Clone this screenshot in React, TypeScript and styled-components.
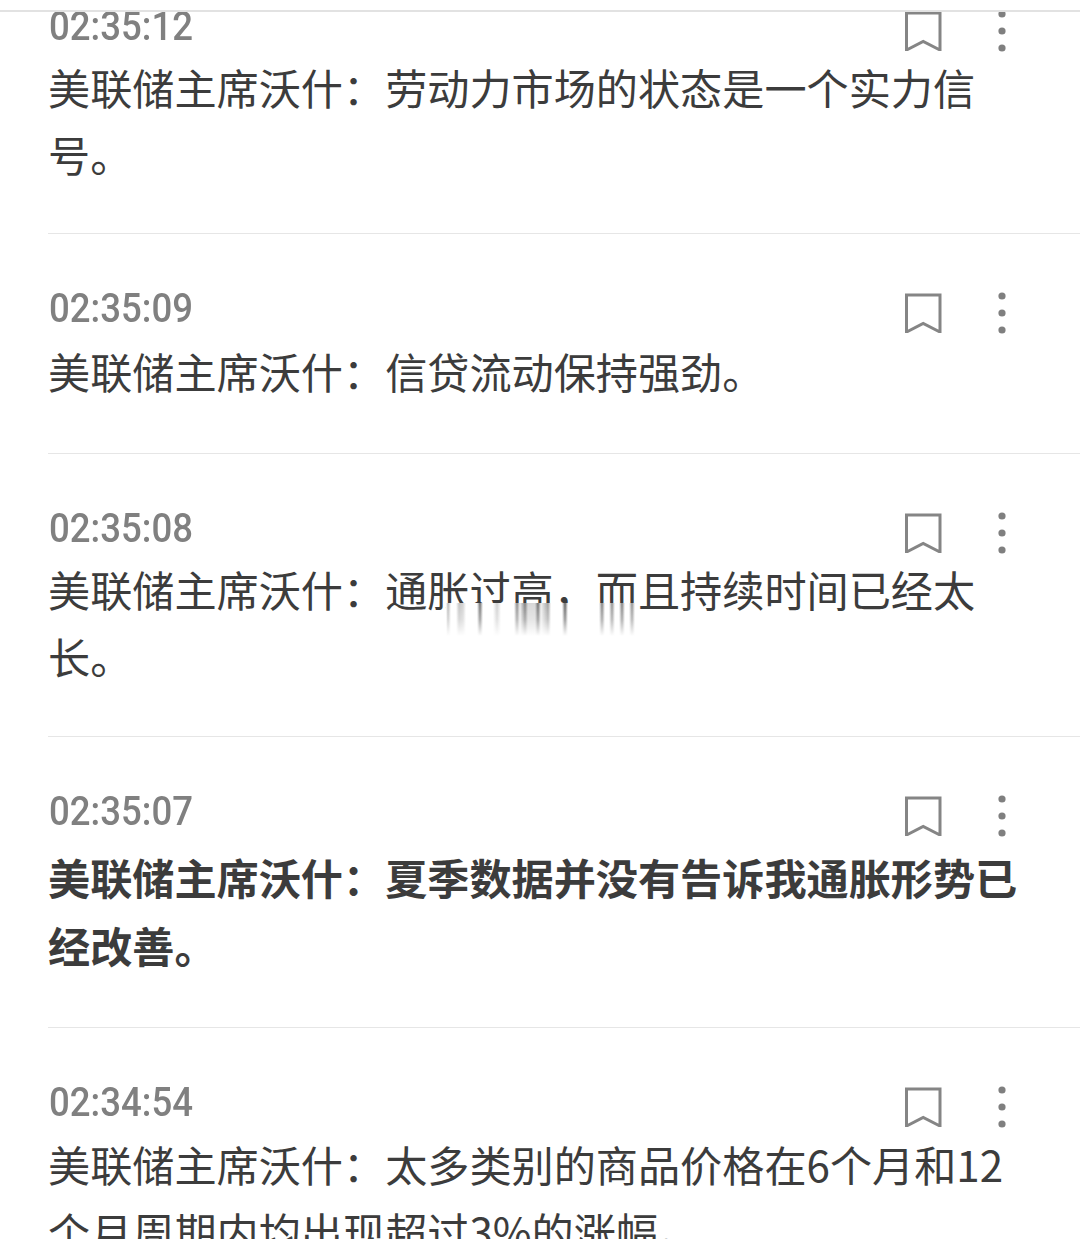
import React, { FC } from "react";
import styled, { createGlobalStyle } from "styled-components";

const GlobalStyle = createGlobalStyle`
  html, body {
    margin: 0;
    background: #fff;
  }
  * {
    box-sizing: border-box;
  }
`;

const Page = styled.div`
  position: relative;
  height: 1239px;
  padding-top: 10px;
  overflow: hidden;
  display: flex;
  flex-direction: column;
  background: #fff;
  font-family: "Noto Sans CJK SC", "Noto Sans", sans-serif;
`;

const TopRule = styled.div`
  flex: none;
  height: 2px;
  background: #e2e2e2;
  position: relative;
  z-index: 1;
`;

const Feed = styled.div`
  flex: 1;
  min-height: 0;
  overflow: hidden;
`;

const FeedList = styled.div`
  margin-top: -60px;
`;

const Row = styled.article<{ $tail: number }>`
  margin-left: 48px;
  padding: 53px 0 ${({ $tail }) => $tail}px;
  border-bottom: 1px solid #e6e6e6;
  &:last-child {
    border-bottom: none;
  }
`;

const RowHead = styled.div`
  display: flex;
  align-items: center;
  height: 42px;
  padding-left: 1px;
`;

const Time = styled.time`
  flex: 1;
  font-family: Roboto, "Liberation Sans", sans-serif;
  font-size: 41px;
  line-height: 42px;
  font-weight: 500;
  color: #808080;
  transform: scaleX(0.892);
  transform-origin: left center;
`;

const Actions = styled.div`
  display: flex;
  align-items: center;
  gap: 56px;
  margin: 10px 74px 0 0;
`;

const Icon = styled.svg`
  display: block;
  flex: none;
`;

const Body = styled.p<{ $gap: number; $bold?: boolean }>`
  margin: ${({ $gap }) => $gap}px 48px 0 0;
  font-size: 42.15px;
  line-height: ${({ $bold }) => ($bold ? 68 : 67)}px;
  font-weight: ${({ $bold }) => ($bold ? 700 : 400)};
  color: #3c3c3c;
`;

const Smear = styled.div`
  position: absolute;
  left: 446px;
  top: 603px;
  width: 190px;
  height: 33px;
  filter: blur(0.6px);
  background:
    linear-gradient(to bottom, rgba(255, 255, 255, 0) 0%, rgba(255, 255, 255, 0.35) 50%, #fff 100%),
    linear-gradient(
      to right,
      #fff 0,
      #b8b8b8 2px,
      #fff 5px,
      #fff 10px,
      #c4c4c4 13px,
      #d4d4d4 17px,
      #fff 20px,
      #fff 31px,
      #707070 34px,
      #fff 37px,
      #fff 47px,
      #d0d0d0 51px,
      #fff 55px,
      #fff 68px,
      #8c8c8c 71px,
      #f0f0f0 74px,
      #808080 79px,
      #d8d8d8 82px,
      #d8d8d8 89px,
      #707070 92px,
      #f0f0f0 95px,
      #a0a0a0 102px,
      #fff 105px,
      #fff 116px,
      #606060 119px,
      #fff 122px,
      #fff 153px,
      #808080 156px,
      #fff 159px,
      #fff 163px,
      #909090 166px,
      #fff 169px,
      #fff 173px,
      #808080 176px,
      #fff 179px,
      #fff 183px,
      #909090 186px,
      #fff 189px
    );
`;

const BookmarkIcon: FC = () => (
  <Icon width="38" height="40" viewBox="0 0 38 40" fill="none">
    <path d="M2.5 39V2H36V39L19.2 30.5Z" stroke="#858585" strokeWidth="3" />
  </Icon>
);

const MoreIcon: FC = () => (
  <Icon width="8" height="42" viewBox="0 0 8 42" fill="#7f7f7f">
    <circle cx="4" cy="4" r="3.6" />
    <circle cx="4" cy="21" r="3.6" />
    <circle cx="4" cy="38" r="3.6" />
  </Icon>
);

interface FlashItem {
  time: string;
  text: string;
  gap: number;
  tail: number;
  bold?: boolean;
}

const items: FlashItem[] = [
  { time: "02:35:12", text: "美联储主席沃什：劳动力市场的状态是一个实力信号。", gap: 6, tail: 46 },
  { time: "02:35:09", text: "美联储主席沃什：信贷流动保持强劲。", gap: 8, tail: 49 },
  { time: "02:35:08", text: "美联储主席沃什：通胀过高，而且持续时间已经太长。", gap: 6, tail: 47 },
  { time: "02:35:07", text: "美联储主席沃什：夏季数据并没有告诉我通胀形势已经改善。", gap: 11, tail: 48, bold: true },
  { time: "02:34:54", text: "美联储主席沃什：太多类别的商品价格在6个月和12个月周期内均出现超过3%的涨幅。", gap: 7, tail: 43 }
];

const App: FC = () => {
  return (
    <Page>
      <GlobalStyle />
      <TopRule />
      <Feed>
        <FeedList>
          {items.map((item) => (
            <Row key={item.time} $tail={item.tail}>
              <RowHead>
                <Time>{item.time}</Time>
                <Actions>
                  <BookmarkIcon />
                  <MoreIcon />
                </Actions>
              </RowHead>
              <Body $gap={item.gap} $bold={item.bold}>
                {item.text}
              </Body>
            </Row>
          ))}
        </FeedList>
      </Feed>
      <Smear />
    </Page>
  );
};

export default App;
